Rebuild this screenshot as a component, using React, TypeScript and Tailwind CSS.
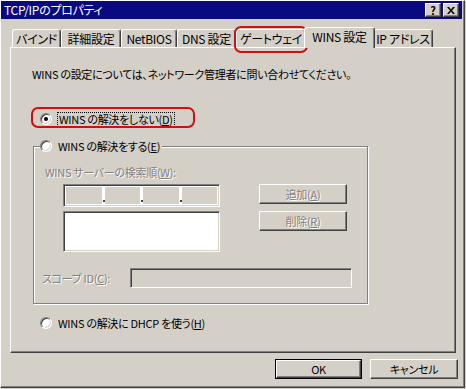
import React from "react"

const raised = "border-t border-l border-t-white border-l-white border-r border-b border-r-[#404040] border-b-[#404040] shadow-[inset_-1px_-1px_0_#808080]"
const sunken = "border-t border-l border-t-[#808080] border-l-[#808080] border-r border-b border-r-white border-b-white shadow-[inset_1px_1px_0_#404040,inset_-1px_-1px_0_#d4d0c8]"
const disabled = "text-[#808080] [text-shadow:1px_1px_0_#fff]"

function Radio({ checked }: { checked?: boolean }) {
  return (
    <span className="flex h-[12px] w-[12px] shrink-0 items-center justify-center rounded-full border border-t-[#808080] border-l-[#808080] border-r-white border-b-white bg-white shadow-[inset_1px_1px_0_#404040,inset_-1px_-1px_0_#d4d0c8]">
      {checked && <span className="h-[4px] w-[4px] rounded-full bg-black" />}
    </span>
  )
}

function Tab({ label, w, active }: { label: string; w: number; active?: boolean }) {
  if (active) {
    return (
      <div
        className="relative z-10 -mx-[2px] -mb-[1px] flex h-[21px] items-start justify-center rounded-t-[3px] border-t border-l border-r border-t-white border-l-white border-r-[#404040] bg-[#d4d0c8] pt-[2px] shadow-[inset_-1px_0_0_#808080]"
        style={{ width: w + 4 }}
      >
        {label}
      </div>
    )
  }
  return (
    <div
      className="flex h-[18px] items-center justify-center rounded-t-[3px] border-t border-l border-r border-t-white border-l-white border-r-[#404040] pt-[1px] shadow-[inset_-1px_0_0_#808080]"
      style={{ width: w }}
    >
      {label}
    </div>
  )
}

function Button({ children, w, off, isDefault }: { children: React.ReactNode; w: number; off?: boolean; isDefault?: boolean }) {
  const inner = (
    <div className={`flex h-full w-full items-center justify-center ${raised} ${off ? disabled : ""}`}>{children}</div>
  )
  if (isDefault) {
    return (
      <div className="h-[20px] border border-black" style={{ width: w }}>
        {inner}
      </div>
    )
  }
  return (
    <div className="h-[20px]" style={{ width: w }}>
      {inner}
    </div>
  )
}

export default function App() {
  return (
    <div className="relative h-[389px] w-[466px] overflow-hidden bg-[#d4d0c8] font-['MS_UI_Gothic','Noto_Sans_CJK_JP',sans-serif] text-[11px] leading-[14px] tracking-[-0.3px] text-black [font-feature-settings:'palt']">
      <div className="h-[388px] w-[465px] border-t border-l border-t-white border-l-white border-r border-b border-r-[#404040] border-b-[#404040] shadow-[inset_-1px_-1px_0_#808080]">
        {/* title bar */}
        <div className="mr-[2px] flex h-[18px] items-center bg-[#0a0a80] pl-[3px] pr-[3px] text-[12px] text-white">
          <span className="flex-1">TCP/IPのプロパティ</span>
          <div className={`flex h-[14px] w-[16px] items-center justify-center bg-[#d4d0c8] text-[11px] font-bold text-black ${raised}`}>?</div>
          <div className={`ml-[2px] flex h-[14px] w-[16px] items-center justify-center bg-[#d4d0c8] ${raised}`}>
            <svg width="8" height="7" viewBox="0 0 8 7">
              <path d="M0 0h2l2 2.5L6 0h2L5 3.5 8 7H6L4 4.5 2 7H0l3-3.5z" fill="#000" />
            </svg>
          </div>
        </div>

        {/* tabs + panel */}
        <div className="ml-[9px] mt-[8px]">
          <div className="flex h-[20px] items-end pl-[2px] text-[12px]">
            <Tab label="バインド" w={49} />
            <Tab label="詳細設定" w={60} />
            <Tab label="NetBIOS" w={56} />
            <Tab label="DNS 設定" w={59} />
            <Tab label="ゲートウェイ" w={70} />
            <Tab label="WINS 設定" w={67} active />
            <Tab label="IP アドレス" w={60} />
          </div>
          <div className="h-[306px] w-[446px] border-t border-l border-t-white border-l-white border-r border-b border-r-[#404040] border-b-[#404040] shadow-[inset_-1px_-1px_0_#808080]">
            <p className="ml-[21px] mt-[19px]">WINS の設定については、ネットワーク管理者に問い合わせてください。</p>

            <div className="ml-[29px] mt-[30px] flex h-[16px] items-center">
              <Radio checked />
              <span className="ml-[5px] border border-dotted border-black px-[1px] leading-[13px]">
                WINS の解決をしない(<u>D</u>)
              </span>
            </div>

            {/* group box */}
            <div className="ml-[22px] mt-[19px] h-[158px] w-[335px] border border-[#808080] shadow-[inset_1px_1px_0_#fff,1px_1px_0_#fff]">
              <div className="-mt-[9px] ml-[6px] flex h-[16px] w-fit items-center bg-[#d4d0c8] pr-[2px]">
                <Radio />
                <span className="ml-[6px]">WINS の解決をする(<u>E</u>)</span>
              </div>
              <p className={`ml-[11px] mt-[11px] ${disabled}`}>
                WINS サーバーの検索順(<u>W</u>):
              </p>
              <div className="ml-[29px] mt-[5px] flex">
                <div className="flex flex-col gap-[4px]">
                  <div className={`flex h-[23px] w-[157px] bg-white p-[2px] ${sunken}`}>
                    <div className="flex-1 bg-[#d4d0c8]" />
                    <div className="relative w-[3px]">
                      <span className="absolute bottom-[2px] left-[1px] h-[2px] w-[2px] bg-[#404040]" />
                    </div>
                    <div className="flex-1 bg-[#d4d0c8]" />
                    <div className="relative w-[3px]">
                      <span className="absolute bottom-[2px] left-[1px] h-[2px] w-[2px] bg-[#404040]" />
                    </div>
                    <div className="flex-1 bg-[#d4d0c8]" />
                    <div className="relative w-[3px]">
                      <span className="absolute bottom-[2px] left-[1px] h-[2px] w-[2px] bg-[#404040]" />
                    </div>
                    <div className="flex-1 bg-[#d4d0c8]" />
                  </div>
                  <div className={`h-[41px] w-[157px] bg-white ${sunken}`} />
                </div>
                <div className="ml-[39px] flex flex-col gap-[7px]">
                  <Button w={88} off>
                    追加(<u>A</u>)
                  </Button>
                  <Button w={88} off>
                    削除(<u>R</u>)
                  </Button>
                </div>
              </div>
              <div className="mt-[16px] flex h-[20px] items-center">
                <span className={`ml-[8px] w-[88px] ${disabled}`}>
                  スコープ ID(<u>C</u>):
                </span>
                <div className={`h-[20px] w-[222px] ${sunken}`} />
              </div>
            </div>

            <div className="ml-[29px] mt-[11px] flex h-[16px] items-center">
              <Radio />
              <span className="ml-[6px]">
                WINS の解決に DHCP を使う(<u>H</u>)
              </span>
            </div>
          </div>
        </div>

        {/* dialog buttons */}
        <div className="mr-[6px] mt-[6px] flex justify-end gap-[8px]">
          <Button w={87} isDefault>
            OK
          </Button>
          <Button w={88}>キャンセル</Button>
        </div>
      </div>

      {/* red annotation rings */}
      <div className="pointer-events-none absolute left-[234px] top-[26px] h-[27px] w-[74px] rounded-[7px] border-2 border-[#d01010]" />
      <div className="pointer-events-none absolute left-[31px] top-[107px] h-[21px] w-[164px] rounded-[7px] border-2 border-[#d01010]" />
    </div>
  )
}
